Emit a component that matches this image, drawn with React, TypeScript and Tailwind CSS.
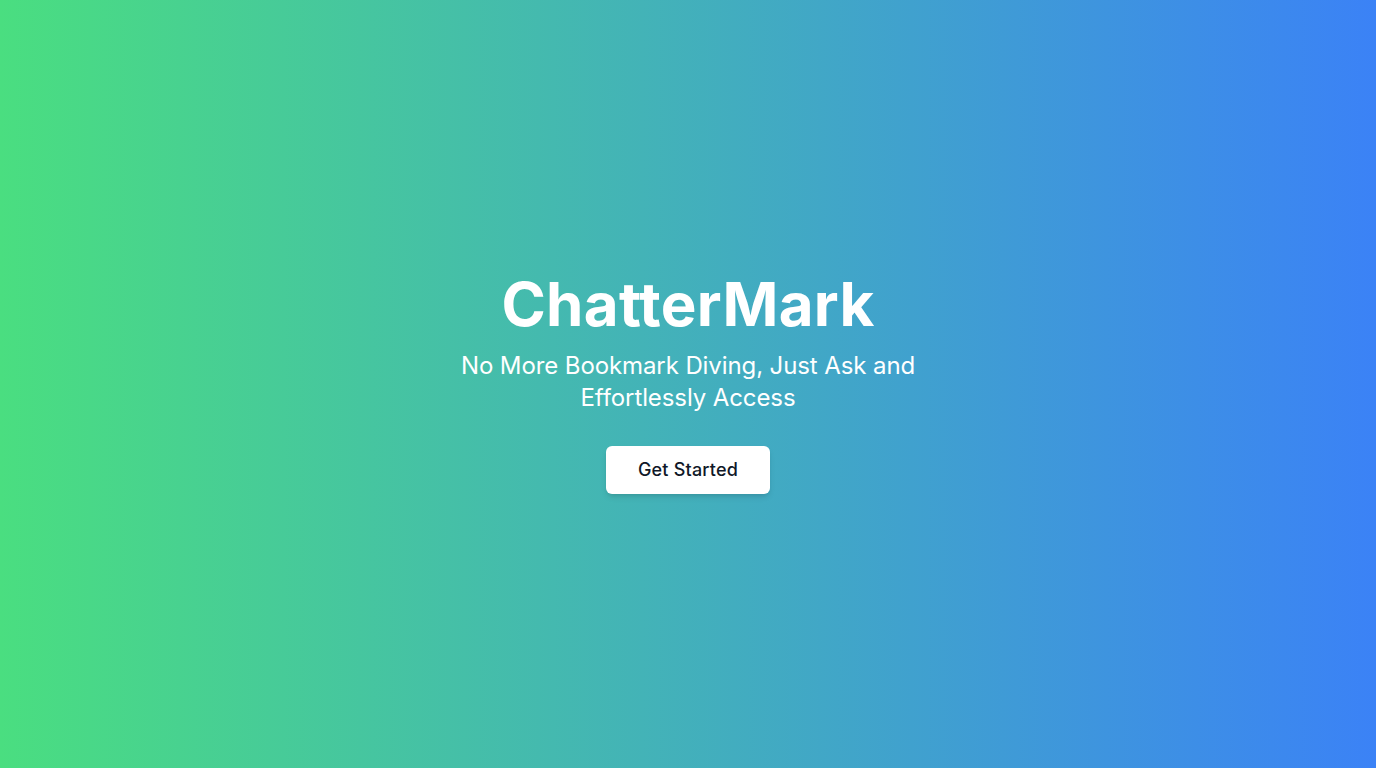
export default function App() {
  return (
    <div
      className="min-h-screen w-full flex flex-col items-center justify-center bg-linear-to-r/srgb from-[#4ade80] to-[#3b82f6] text-white text-center [font-variant-ligatures:none]"
      style={{ fontFamily: "Inter, 'Noto Sans', sans-serif" }}
    >
      <h1 className="text-6xl font-bold tracking-[0.3px] mb-4">ChatterMark</h1>
      <p className="text-2xl tracking-[-0.1px] max-w-[460px] mb-8">
        No More Bookmark Diving, Just Ask and Effortlessly Access
      </p>
      <button className="bg-white text-gray-900 text-lg leading-6 tracking-[0.2px] font-medium px-8 py-3 rounded-md shadow-md">
        Get Started
      </button>
    </div>
  );
}
